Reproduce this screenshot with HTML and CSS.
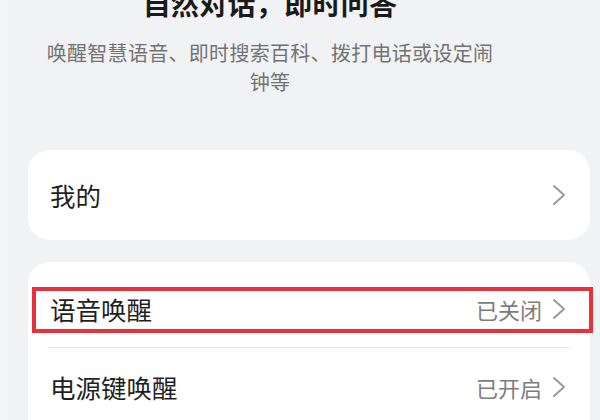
FILE: index.html
```html
<!DOCTYPE html>
<html lang="zh-CN">
<head>
<meta charset="utf-8">
<title>语音助手设置</title>
<link rel="stylesheet" href="styles.css">
</head>
<body>
<div class="page">
  <header class="intro">
    <h1 class="title">自然对话，即时问答</h1>
    <p class="desc">唤醒智慧语音、即时搜索百科、拨打电话或设定闹钟等</p>
  </header>

  <section class="card single">
    <div class="row">
      <span class="label">我的</span>
      <span class="right">
        <svg class="chev" viewBox="0 0 14 22" width="14" height="22"><path d="M2 2 L12 11 L2 20" fill="none" stroke="#9a9a9a" stroke-width="2" stroke-linecap="round" stroke-linejoin="round"/></svg>
      </span>
    </div>
  </section>

  <section class="card list">
    <div class="row item highlighted">
      <span class="label">语音唤醒</span>
      <span class="right">
        <span class="status">已关闭</span>
        <svg class="chev" viewBox="0 0 14 22" width="14" height="22"><path d="M2 2 L12 11 L2 20" fill="none" stroke="#9a9a9a" stroke-width="2" stroke-linecap="round" stroke-linejoin="round"/></svg>
      </span>
      <span class="mark"></span>
    </div>
    <div class="divider"></div>
    <div class="row item">
      <span class="label">电源键唤醒</span>
      <span class="right">
        <span class="status">已开启</span>
        <svg class="chev" viewBox="0 0 14 22" width="14" height="22"><path d="M2 2 L12 11 L2 20" fill="none" stroke="#9a9a9a" stroke-width="2" stroke-linecap="round" stroke-linejoin="round"/></svg>
      </span>
    </div>
  </section>
</div>
</body>
</html>
```

FILE: styles.css
```css
html, body {
  margin: 0;
  padding: 0;
}

body {
  width: 600px;
  height: 420px;
  overflow: hidden;
  background: linear-gradient(to right, #f6f6f8 0, #f6f6f8 7px, #f1f2f4 7px);
  font-family: "Noto Sans CJK SC", "Noto Sans", sans-serif;
  color: #1f1f1f;
}

.page {
  display: flex;
  flex-direction: column;
  padding: 0 10px 0 28px;
}

.intro {
  margin: -15px 50px 0 -28px;
  text-align: center;
}

.title {
  margin: 0;
  font-size: 28px;
  line-height: 36px;
  font-weight: 700;
  letter-spacing: 0.3px;
  color: #1a1a1a;
}

.desc {
  margin: 17px auto 0;
  width: 458px;
  font-size: 20px;
  line-height: 29px;
  letter-spacing: 0.3px;
  color: #727272;
}

.card {
  background: #ffffff;
  border-radius: 22px;
}

.single {
  margin-top: 54px;
  height: 90px;
  display: flex;
  flex-direction: column;
  justify-content: center;
}

.list {
  margin-top: 22px;
  padding-top: 8px;
  height: 180px;
}

.row {
  position: relative;
  display: flex;
  align-items: center;
  justify-content: space-between;
  padding: 0 24px 0 22px;
}

.single .row {
  height: 90px;
}

.item {
  height: 77px;
}

.label {
  font-size: 25.5px;
  line-height: 30px;
  color: #1f1f1f;
}

.right {
  display: flex;
  align-items: center;
  gap: 10px;
}

.status {
  font-size: 22px;
  line-height: 28px;
  color: #7d7d7d;
}

.chev {
  display: block;
}

.divider {
  height: 1px;
  margin: 0 20px;
  background: #e9e9eb;
}

.mark {
  position: absolute;
  left: 4px;
  top: 17px;
  width: 561px;
  height: 46px;
  box-sizing: border-box;
  border: 4px solid #e8313a;
  pointer-events: none;
}
```
